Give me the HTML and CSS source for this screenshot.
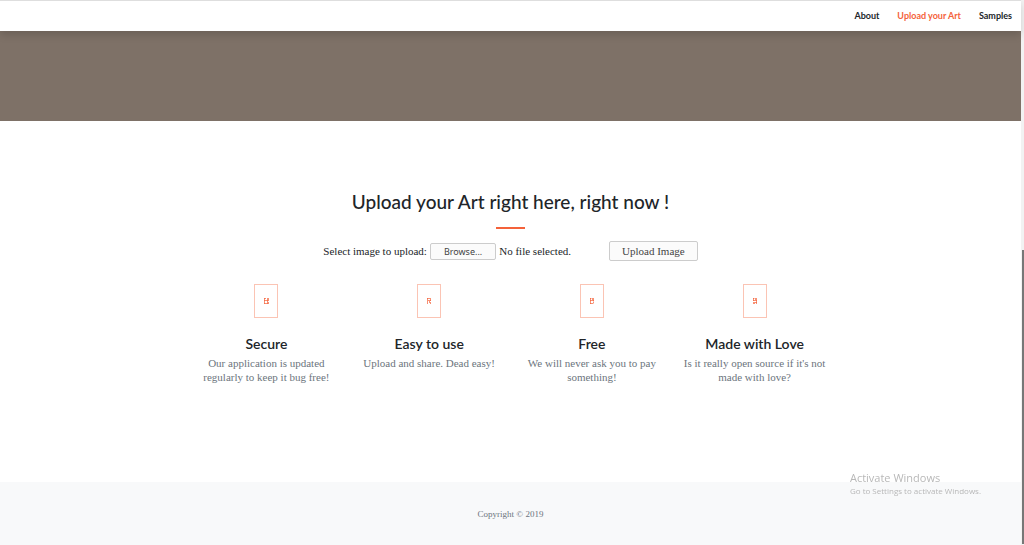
FILE: index.html
```html
<!DOCTYPE html>
<html lang="en">
<head>
<meta charset="utf-8">
<title>Upload your Art</title>
<link rel="stylesheet" href="styles.css">
</head>
<body>
<div class="page">
  <nav class="navbar">
    <a class="nav-link" href="#about">About</a>
    <a class="nav-link active" href="#upload">Upload your Art</a>
    <a class="nav-link" href="#samples">Samples</a>
  </nav>
  <header class="masthead"></header>
  <main class="upload" id="upload">
    <h2 class="title">Upload your Art right here, right now !</h2>
    <hr class="divider">
    <form class="upload-form">
      <label class="file-field" for="art">
        <span>Select image to upload:</span>
        <span class="browse">Browse...</span>
        <span>No file selected.</span>
        <input class="file-input" type="file" id="art" name="art">
      </label>
      <button class="submit" type="submit">Upload Image</button>
    </form>
    <div class="features">
      <section class="feature">
        <svg class="icon" viewBox="0 0 24 34" aria-hidden="true"><rect class="frame" x=".5" y=".5" width="23" height="33"/><path class="code" d="M10.500 14v6M10 14.500h2M10 16.500h4M13.500 14v6M10 19.500h4M14.500 14v3M14.500 18v2"/></svg>
        <h3 class="name">Secure</h3>
        <p class="text">Our application is updated regularly to keep it bug free!</p>
      </section>
      <section class="feature">
        <svg class="icon" viewBox="0 0 24 34" aria-hidden="true"><rect class="frame" x=".5" y=".5" width="23" height="33"/><path class="code" d="M10.500 14v6M10 14.500h4M13.500 15v2M11 16.500h3M12.500 17v2M13.500 18v2"/></svg>
        <h3 class="name">Easy to use</h3>
        <p class="text">Upload and share. Dead easy!</p>
      </section>
      <section class="feature">
        <svg class="icon" viewBox="0 0 24 34" aria-hidden="true"><rect class="frame" x=".5" y=".5" width="23" height="33"/><path class="code" d="M10.500 14v6M10 14.500h1.500M10 16.500h4M13.500 14v3M10 19.500h3M12.500 14v2M13.500 17.500v2"/></svg>
        <h3 class="name">Free</h3>
        <p class="text">We will never ask you to pay something!</p>
      </section>
      <section class="feature">
        <svg class="icon" viewBox="0 0 24 34" aria-hidden="true"><rect class="frame" x=".5" y=".5" width="23" height="33"/><path class="code" d="M10.500 14v3M10 14.500h1.500M10 16.500h4M13.500 14v6M10 19.500h2M10 18.500h4M12.500 14v2"/></svg>
        <h3 class="name">Made with Love</h3>
        <p class="text">Is it really open source if it's not made with love?</p>
      </section>
    </div>
  </main>
  <footer class="footer">Copyright © 2019</footer>
</div>
<div class="scroll-track"><div class="scroll-thumb"></div></div>
<aside class="watermark">
  <p class="watermark-title">Activate Windows</p>
  <p class="watermark-text">Go to Settings to activate Windows.</p>
</aside>
</body>
</html>
```
FILE: styles.css
```css
* { box-sizing: border-box; }

body {
  margin: 0;
  display: flex;
  min-height: 100vh;
  background: #fff;
  color: #212529;
  font-family: "Liberation Serif", serif;
  font-size: 11px;
  line-height: 14px;
}

.page {
  flex: 1;
  display: flex;
  flex-direction: column;
}

.navbar {
  position: relative;
  display: flex;
  justify-content: flex-end;
  gap: 18px;
  padding: 7px 9px 7px 0;
  border-top: 1px solid #dedede;
  background: #fff;
  box-shadow: 0 4px 8px rgba(0, 0, 0, .15);
  font: 700 9px/16px Lato, sans-serif;
}

.nav-link { color: #212529; text-decoration: none; }
.nav-link.active { color: #f4623a; }

.masthead { height: 90px; background: #7e7167; }

.upload {
  display: flex;
  flex-direction: column;
  align-items: center;
  padding: 68px 24px 98px;
}

.title {
  margin: 0;
  font: 500 19px/26px Lato, sans-serif;
}

.divider {
  width: 29px;
  height: 2px;
  margin: 12px 0;
  border: 0;
  background: #f4623a;
}

.upload-form {
  display: flex;
  align-items: center;
  gap: 38px;
}

.file-field {
  position: relative;
  display: flex;
  align-items: center;
  gap: 3px;
}

.file-input {
  position: absolute;
  inset: 0;
  width: 100%;
  opacity: 0;
}

.browse, .submit {
  border: 1px solid #ccc;
  border-radius: 2px;
  background: #fbfbfb;
  color: #444;
}

.browse {
  padding: 0 13px;
  font: 9px/15px "Noto Sans", sans-serif;
}

.submit {
  padding: 2px 12px;
  font: inherit;
}

.features {
  display: grid;
  grid-template-columns: repeat(4, 1fr);
  width: 100%;
  max-width: 651px;
  margin-top: 23px;
}

.feature {
  display: flex;
  flex-direction: column;
  align-items: center;
  padding: 0 9px;
  text-align: center;
}

.icon { width: 24px; height: 34px; }
.frame { fill: none; stroke: #fbc4b4; }
.code { fill: none; stroke: #f4623a; stroke-opacity: .7; }

.name {
  margin: 17px 0 3px;
  font: 600 14px/18px Lato, sans-serif;
}

.text { margin: 0; color: #6c757d; }

.footer {
  flex: 1;
  padding: 25px 0;
  background: #f8f9fa;
  color: #6c757d;
  font-size: 9px;
  text-align: center;
}

.scroll-track {
  display: flex;
  flex-direction: column;
  justify-content: flex-end;
  align-items: flex-end;
  width: 3px;
  padding-bottom: 2px;
  background: #f2f2f2;
}

.scroll-thumb { width: 2px; height: 54%; background: #777; }

.watermark {
  position: fixed;
  right: 43px;
  bottom: 49px;
  color: #b8b8b8;
  font: 8px/11px "Open Sans", sans-serif;
}

.watermark p { margin: 0; }
.watermark .watermark-title { font-size: 11px; line-height: 14px; }
```
